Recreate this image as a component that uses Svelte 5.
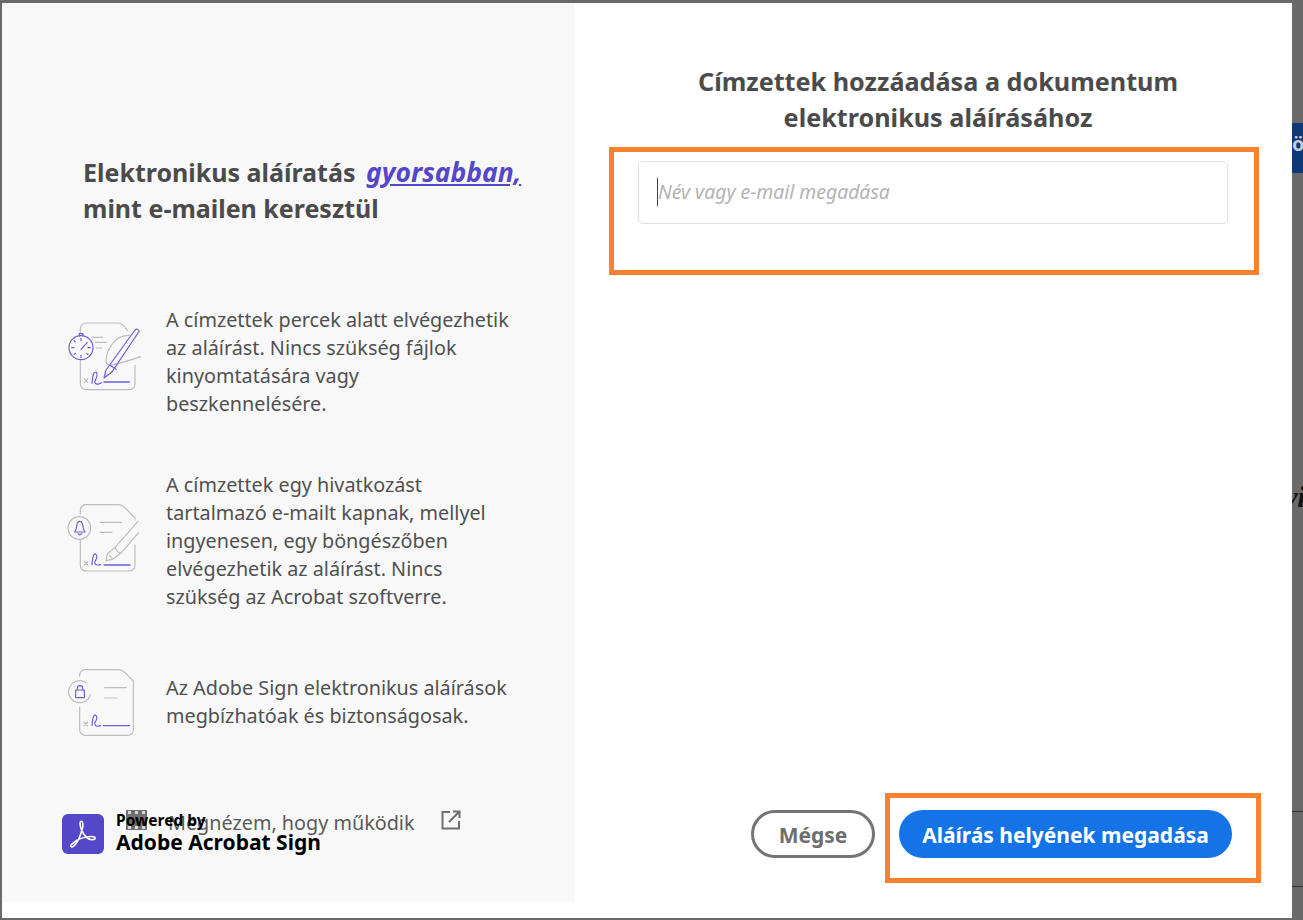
<script>
  const features = [
    { id: 'time', text: 'A címzettek percek alatt elvégezhetik az aláírást. Nincs szükség fájlok kinyomtatására vagy beszkennelésére.' },
    { id: 'bell', text: 'A címzettek egy hivatkozást tartalmazó e-mailt kapnak, mellyel ingyenesen, egy böngészőben elvégezhetik az aláírást. Nincs szükség az Acrobat szoftverre.' },
    { id: 'lock', text: 'Az Adobe Sign elektronikus aláírások megbízhatóak és biztonságosak.' }
  ];
</script>

<div class="page">
  <div class="behind">
    <span class="tab">ö</span>
    <span class="vi">vi</span>
    <span class="rule r1"></span>
    <span class="rule r2"></span>
  </div>

  <div class="modal">
    <section class="left">
      <h2>Elektronikus aláíratás <em>gyorsabban,</em><br />mint e-mailen keresztül</h2>

      <ul>
        {#each features as f}
          <li class={f.id}>
            <div class="icon">
              {#if f.id === 'time'}
                <svg viewBox="0 0 330 330" width="110" height="110" fill="none" stroke-linecap="round" stroke-linejoin="round">
                  <g stroke="#bdbdbd" stroke-width="3.5">
                    <path d="M91 100V88Q91 69 110 69H205Q218 69 232 92" />
                    <path d="M255 196V250Q255 269 236 269H110Q91 269 91 250V182" />
                    <path d="M125 112H158M135 127H169M137 144H155" />
                    <path d="M238 106Q205 106 188 130Q168 155 168 188L178 197Q230 185 272 170" />
                    <path d="M103 236L114 248M114 236L103 248" />
                  </g>
                  <g stroke="#6a5fd6" stroke-width="3.5">
                    <circle cx="93" cy="143" r="36" />
                    <path d="M88 108V101H99V108" />
                    <path d="M93 148L112 127M93 115V122M93 165V172M65 143H72M114 143H121M72 122L76 126M72 164L76 160M114 164L110 160" />
                    <path d="M168 210L255 90Q263 84 268 93L185 217L162 234Z" />
                    <path d="M180 196L198 208" />
                    <path d="M126 250Q128 214 138 216Q146 222 134 246Q138 258 154 248" />
                    <path d="M162 246H238" stroke-width="4.5" />
                  </g>
                </svg>
              {:else if f.id === 'bell'}
                <svg viewBox="0 0 330 300" width="110" height="100" fill="none" stroke-linecap="round" stroke-linejoin="round">
                  <g stroke="#bdbdbd" stroke-width="3.5">
                    <path d="M91 72V62Q91 44 110 44H205Q216 44 224 52L255 84V90" />
                    <path d="M255 165V225Q255 243 236 243H110Q91 243 91 225V150" />
                    <path d="M150 97H215M150 127H186" />
                    <circle cx="88" cy="114" r="34" />
                    <path d="M103 214L114 226M114 214L103 226" />
                    <path d="M264 94L195 172Q200 186 212 190L266 128" />
                    <path d="M195 172L172 192L168 212L188 208L212 190" />
                    <path d="M178 196L186 204" />
                  </g>
                  <g stroke="#6a5fd6" stroke-width="3.5">
                    <path d="M74 126Q80 118 80 108Q82 94 89 94Q97 94 99 108Q99 118 105 126Z" />
                    <path d="M84 131Q89 138 95 131" />
                    <path d="M126 224Q128 190 136 192Q146 198 134 216Q134 228 152 224" />
                    <path d="M163 225H240" stroke-width="4.5" />
                  </g>
                </svg>
              {:else}
                <svg viewBox="0 0 330 285" width="110" height="95" fill="none" stroke-linecap="round" stroke-linejoin="round">
                  <g stroke="#bdbdbd" stroke-width="3.5">
                    <path d="M89 64V62Q89 44 108 44H205Q216 44 224 52L250 78V222Q250 241 231 241H108Q89 241 89 222V156" />
                    <path d="M164 98H229M164 129H201" />
                    <path d="M108 83A33 33 0 1 0 121 118" />
                    <path d="M102 201L113 213M113 201L102 213" />
                  </g>
                  <g stroke="#6a5fd6" stroke-width="3.5">
                    <rect x="77" y="105" width="26" height="23" rx="2" />
                    <path d="M82 105V100Q82 92 90 92Q98 92 98 100V105" />
                    <path d="M126 212Q128 178 136 180Q146 186 134 204Q134 218 152 212" />
                    <path d="M160 212H239" />
                  </g>
                </svg>
              {/if}
            </div>
            <p>{f.text}</p>
          </li>
        {/each}
      </ul>

      <div class="video">
        <svg class="film" viewBox="0 0 21 20" width="21" height="20">
          <rect width="21" height="20" fill="#6f6f6f" />
          <path d="M2 1h3v3H2zM9 1h3v3H9zM16 1h3v3h-3zM2 16h3v3H2zM9 16h3v3H9zM16 16h3v3h-3z" fill="#d8d8d8" />
        </svg>
        <span class="video-label">Megnézem, hogy működik</span>
        <svg class="external" viewBox="0 0 20 20" width="20" height="20" fill="none" stroke="#6e6e6e" stroke-width="2">
          <path d="M9 2H1.5V18.5H18V11" />
          <path d="M8 12L18 2M12 1.5H18.5V8" />
        </svg>
      </div>

      <div class="brand">
        <div class="logo">
          <svg viewBox="0 0 42 40" width="42" height="40" fill="none" stroke="#fff" stroke-width="1.6" stroke-linejoin="round">
            <path d="M9.5 30.5C7.5 31.8 9.5 34 11.6 32.2C15.4 29 18.7 21 20.4 14.5C21.4 10.6 20.8 7.3 19.4 7.3C17.6 7.3 17.7 11 19.3 15.4C21.8 21.6 25.8 25.4 29.8 25.7C32.6 25.9 34 24.3 32.6 23.2C30.6 21.6 22.8 22.8 17.4 25C13.8 26.4 11.4 29.2 9.5 30.5Z" />
          </svg>
        </div>
        <div class="brand-text">
          <span class="powered">Powered by</span>
          <span class="product">Adobe Acrobat Sign</span>
        </div>
      </div>
    </section>

    <section class="right">
      <h1>Címzettek hozzáadása a dokumentum elektronikus aláírásához</h1>
      <div class="recipient">
        <span class="caret"></span>
        <span class="placeholder">Név vagy e-mail megadása</span>
      </div>
      <div class="actions">
        <button class="cancel">Mégse</button>
        <button class="primary">Aláírás helyének megadása</button>
      </div>
    </section>

    <div class="mark mark-input"></div>
    <div class="mark mark-button"></div>
  </div>
</div>

<style>
  :global(body) {
    margin: 0;
    background: #6a6a6a;
  }
  .page {
    position: relative;
    height: 920px;
    overflow: hidden;
    box-sizing: border-box;
    padding: 3px 11px 2px 2px;
    font-family: "Noto Sans", "Open Sans", sans-serif;
  }

  /* page showing through the dimmed backdrop */
  .tab {
    position: absolute;
    left: 1292px;
    top: 123px;
    width: 11px;
    height: 50px;
    background: #0d3a75;
    color: #c4cedd;
    font: 700 20px/42px "Noto Sans", sans-serif;
    overflow: hidden;
  }
  .vi {
    position: absolute;
    left: 1284px;
    top: 480px;
    font: italic 700 30px "Liberation Serif", serif;
    color: #111;
  }
  .rule {
    position: absolute;
    left: 1292px;
    width: 11px;
    height: 1px;
    background: #333;
  }
  .r0 { top: 182px; }
  .r1 { top: 811px; }
  .r2 { top: 886px; }

  .modal {
    position: relative;
    display: grid;
    grid-template-columns: 573px 1fr;
    height: 915px;
    background: #fff;
  }

  .left {
    display: flex;
    flex-direction: column;
    height: 899px;
    box-sizing: border-box;
    padding: 151px 0 0 48px;
    background: #f8f8f8;
  }
  h2 {
    margin: 0 0 0 33px;
    font-size: 25px;
    line-height: 36px;
    font-weight: 700;
    color: #4b4b4b;
    white-space: nowrap;
  }
  h2 em {
    margin-left: 4px;
    font-size: 26.5px;
    color: #5547c9;
    font-style: italic;
    text-decoration: underline;
  }
  ul {
    display: flex;
    flex-direction: column;
    gap: 53px;
    list-style: none;
    margin: 80px 0 0;
    padding: 0;
  }
  li {
    display: flex;
    align-items: flex-start;
  }
  li.lock {
    margin-top: 10px;
  }
  .icon {
    flex: none;
    width: 116px;
  }
  li.time .icon { margin-top: -6px; }
  li.bell .icon { margin-top: 19px; }
  li.lock .icon { margin-top: -19px; }
  svg {
    display: block;
  }
  li p {
    margin: 0;
    width: 350px;
    font-size: 19.8px;
    line-height: 28px;
    color: #505050;
  }

  .video {
    position: relative;
    display: flex;
    align-items: center;
    margin: 58px 0 0 76px;
    height: 28px;
  }
  .film {
    position: absolute;
    left: 0;
    top: 2px;
  }
  .video-label {
    margin-left: 42px;
    font-size: 19.8px;
    color: #5a5a5a;
    white-space: nowrap;
  }
  .external {
    margin-left: 26px;
    margin-top: -4px;
  }

  .brand {
    position: absolute;
    left: 60px;
    top: 809px;
    display: flex;
    gap: 12px;
    align-items: center;
  }
  .logo {
    width: 42px;
    height: 40px;
    border-radius: 6px;
    background: #5447c8;
  }
  .brand-text {
    display: flex;
    flex-direction: column;
    color: #000;
    font-weight: 700;
    white-space: nowrap;
  }
  .powered {
    font-size: 15.5px;
    line-height: 17px;
  }
  .product {
    font-size: 21px;
    line-height: 26px;
  }

  .right {
    display: flex;
    flex-direction: column;
    align-items: center;
  }
  h1 {
    width: 540px;
    margin: 60px 0 0 9px;
    font-size: 25.2px;
    line-height: 36px;
    font-weight: 700;
    text-align: center;
    color: #4b4b4b;
  }
  .recipient {
    display: flex;
    align-items: center;
    box-sizing: border-box;
    width: 590px;
    height: 63px;
    margin: 26px 0 0 -1px;
    padding: 0 0 2px 18px;
    background: #fff;
    border: 1px solid #e1e1e1;
    border-radius: 5px;
  }
  .caret {
    width: 1px;
    height: 28px;
    background: #444;
  }
  .placeholder {
    font-size: 19.4px;
    font-style: italic;
    color: #b3b3b3;
  }
  .actions {
    display: flex;
    gap: 24px;
    align-self: flex-end;
    margin: auto 60px 60px 0;
  }
  button {
    box-sizing: border-box;
    height: 48px;
    border-radius: 24px;
    font-family: inherit;
    font-size: 21px;
    font-weight: 700;
    white-space: nowrap;
    padding: 2px 0 0;
  }
  .cancel {
    width: 124px;
    background: #fff;
    border: 3px solid #747474;
    color: #6e6e6e;
  }
  .primary {
    width: 333px;
    border: 0;
    background: #1473e6;
    color: #fff;
  }

  /* annotation boxes drawn over the dialog */
  .mark {
    position: absolute;
    box-sizing: border-box;
    border: 5px solid #fb8130;
    pointer-events: none;
  }
  .mark-input {
    left: 607px;
    top: 144px;
    width: 650px;
    height: 128px;
  }
  .mark-button {
    left: 883px;
    top: 790px;
    width: 376px;
    height: 90px;
  }
</style>
